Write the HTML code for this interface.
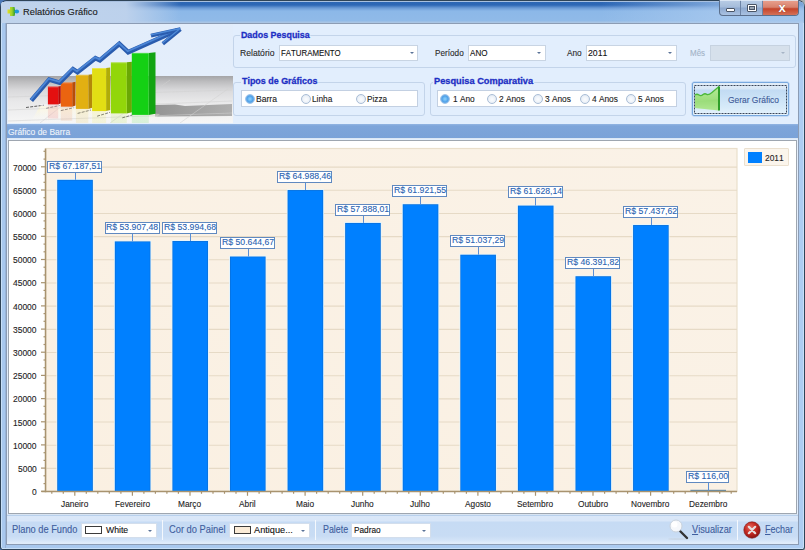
<!DOCTYPE html>
<html><head><meta charset="utf-8">
<style>
*{margin:0;padding:0;box-sizing:border-box}
html,body{width:805px;height:550px;overflow:hidden;background:linear-gradient(90deg,#4a78b8 0,#4a78b8 20px,#a8b0b0 785px)}
body{position:relative;font-family:"Liberation Sans",sans-serif;}
.abs{position:absolute}
#win{position:absolute;left:0;top:0;width:805px;height:550px;background:#2f4458;border-radius:7px 7px 3px 3px;overflow:hidden}
#frame{position:absolute;left:1px;top:1px;width:803px;height:548px;border-radius:6px 6px 2px 2px;background:linear-gradient(90deg,#c8e0f8 0,#c8e0f8 1px,#a8c8ee 1px,#a8c8ee 4px,#98b4d8 4px,#98b4d8 5px,#a8c8ee 5px,#aecdf2 802px,#c8e0f8 802px)}
#title{position:absolute;left:1px;top:1px;width:803px;height:22px;border-radius:6px 6px 0 0;background:linear-gradient(180deg,#a8c0e0 0,#a8c0e0 1px,#2c66b4 1px,#2e68b6 4px,#6b9ad6 7px,#8cb8e8 10px,#90bae8 20px,#a8c4e4 21px)}
#tglow{position:absolute;left:0;top:1px;width:803px;height:21px;background:linear-gradient(90deg,rgba(192,212,236,1) 0,rgba(190,210,236,0.97) 125px,rgba(180,205,235,0) 180px,rgba(170,200,235,0) 600px,rgba(175,205,240,0.6) 715px)}
#ttext{position:absolute;left:23px;top:6px;font-size:11.5px;color:#1a1a1a;letter-spacing:-0.1px}
#client{position:absolute;left:6px;top:23px;width:793px;height:522px;background:#e2eefd;border:1px solid #8c9cb4}
.grp{position:absolute;border:1px solid #c3d4ea;border-radius:3px;background:#e2eefd}
.gt{position:absolute;font-weight:bold;color:#1f32c2;font-size:10.5px;background:#e2eefd;padding:0 1px;white-space:nowrap}
.lbl{position:absolute;font-size:10px;color:#222;white-space:nowrap}
.cmb{position:absolute;background:#fff;border:1px solid #c8d4e3;font-size:10px;color:#111;padding-left:2px;line-height:13px;white-space:nowrap;overflow:hidden}
.cmb.dis{background:#d6e0eb;border-color:#c6d2e0}
.arr{position:absolute;width:0;height:0;border-left:2.5px solid transparent;border-right:2.5px solid transparent;border-top:2.5px solid #5a7398}
.rbox{position:absolute;background:#fff;border:1px solid #c3d0e2}
.rad{position:absolute;width:10px;height:10px;border-radius:50%;border:1px solid #a9bdd6;background:radial-gradient(circle at 50% 55%,#fbfcfe 0,#eef3f9 50%,#d3deec 100%)}
.rad.on{border-color:#9cc2ea;background:radial-gradient(circle,#8fd0fa 0,#6ab8f4 30%,#4f9fe6 55%,#8ec0ee 80%,#c6def6 100%)}
.rt{position:absolute;font-size:10px;color:#222;white-space:nowrap}
#hdr{position:absolute;left:7px;top:124px;width:791px;height:15px;background:linear-gradient(180deg,#93b5e3 0,#7ea5da 2px,#7aa2d8 100%);border-bottom:1px solid #dde8f5}
#hdrt{position:absolute;left:9px;top:126px;font-size:10.5px;color:#eef4fb;white-space:nowrap}
#chartbox{position:absolute;left:8px;top:140px;width:789px;height:374px;background:#fff;border:1px solid #9ea6b0}
.lb{position:absolute;background:#fff;border:1px solid #6089c0;height:12px}
.t{position:absolute;white-space:nowrap;transform-origin:0 0;font-kerning:none;-webkit-text-stroke:0.12px currentColor}
.yl{position:absolute;right:765px;font-size:8.6px;color:#222;line-height:12px;text-align:right;white-space:nowrap}
.ml{position:absolute;top:498px;transform:translateX(-50%);font-size:8.6px;color:#222;line-height:12px;white-space:nowrap}
#tb{position:absolute;left:7px;top:514px;width:791px;height:30px;background:linear-gradient(180deg,#d8e4f2 0,#d8e4f2 1px,#b8d0ec 1px,#b8d0ec 2px,#dae7f8 2px,#d8e6f8 7px,#c6dbf4 8px,#c8dcf4 22px,#d2e3f7 26px,#e0ecfa 29px)}
.tl{position:absolute;font-size:10.5px;color:#3f5fa0;white-space:nowrap}
.sep{position:absolute;width:1px;height:20px;background:#b8c9e0;border-right:1px solid #f4f8fd}
.sw{position:absolute;width:17px;height:8px;border:1px solid #3b3b3b}
</style></head><body>
<div id="win"><div id="frame"></div>
<div id="title"><div id="tglow"></div></div>
<svg class="abs" style="left:6px;top:5px" width="14" height="13" viewBox="0 0 14 13">
 <defs><linearGradient id="ic" x1="0" y1="0" x2="1" y2="0"><stop offset="0" stop-color="#e6e020"/><stop offset="0.6" stop-color="#9ad22a"/><stop offset="1" stop-color="#2f9a2a"/></linearGradient></defs>
 <path d="M4 2 L8.5 2 L9 5 L9 9 L8.5 11 L4 11 L4 8.5 L1.5 8.5 L1.5 4.5 L4 4.5 Z" fill="url(#ic)"/>
 <ellipse cx="10.8" cy="6.6" rx="2.3" ry="2" fill="#1e9ad8"/>
</svg>
<!-- window buttons -->
<div class="abs" style="left:719px;top:0;width:80px;height:16px;border:1px solid #5b6f8c;border-top:none;border-radius:0 0 4px 4px;overflow:hidden;background:linear-gradient(180deg,#b9cde6 0,#a6bddb 45%,#8ea9cf 55%,#a9c2e2 100%)">
 <div class="abs" style="left:20px;top:0;width:1px;height:16px;background:#6d84a6"></div>
 <div class="abs" style="left:42px;top:0;width:1px;height:16px;background:#6d84a6"></div>
 <div class="abs" style="left:43px;top:0;width:36px;height:16px;background:linear-gradient(180deg,#e9a290 0,#d8826e 45%,#c4442b 55%,#d77860 100%)"></div>
 <div class="abs" style="left:6px;top:8px;width:9px;height:4px;background:#fff;border:1px solid #4a5566;border-radius:1px"></div><div class="abs" style="left:0;top:0;width:80px;height:1px;background:#e2ecf8;opacity:0.8"></div>
 <div class="abs" style="left:27px;top:4px;width:10px;height:8px;background:#fff;border:1px solid #4a5566;border-radius:1px"></div><div class="abs" style="left:30px;top:7px;width:4px;height:2px;background:#9aa6b4;box-shadow:0 0 0 1px #4a5566"></div>
 <div class="abs" style="left:54px;top:0;width:16px;height:15px;color:#fff;font-size:13px;font-weight:bold;line-height:15px;text-align:center;text-shadow:0 0 1px #6b2a20">x</div>
</div>
<div id="client"></div>
<div class="abs" style="left:2px;top:548px;width:801px;height:1px;background:#c8e0f8"></div>
</div>

<!-- header image -->
<svg class="abs" style="left:8px;top:24px" width="225" height="99" viewBox="8 24 225 99">
 <defs>
  <linearGradient id="sky" x1="0" y1="0" x2="0" y2="1"><stop offset="0" stop-color="#e2edfb"/><stop offset="1" stop-color="#e6effb"/></linearGradient>
  <linearGradient id="floor" x1="0" y1="76" x2="0" y2="123" gradientUnits="userSpaceOnUse"><stop offset="0" stop-color="#a4a4a6"/><stop offset="0.12" stop-color="#bdbdbf"/><stop offset="0.3" stop-color="#d9d9db"/><stop offset="0.55" stop-color="#e9e9ea"/><stop offset="1" stop-color="#f6f6f6"/></linearGradient>
  <linearGradient id="shad" x1="0" y1="0" x2="1" y2="0"><stop offset="0" stop-color="#8a8a8a"/><stop offset="0.6" stop-color="#9c9c9c"/><stop offset="1" stop-color="#a8a8a8"/></linearGradient>
  <linearGradient id="refl" x1="0" y1="0" x2="0" y2="1"><stop offset="0" stop-color="#fff6c8" stop-opacity="0.9"/><stop offset="1" stop-color="#ffffff" stop-opacity="0"/></linearGradient>
 </defs>
 <rect x="8" y="24" width="225" height="99" fill="url(#sky)"/>
 <rect x="8" y="76" width="225" height="47" fill="url(#floor)"/>
 <path d="M155 105 L175 104.5 L185 106 L232 104 L232 116 L155 116.5 Z" fill="url(#shad)" opacity="0.9"/>
 <path d="M40 106 L160 114 L150 123 L30 123 Z" fill="url(#refl)" opacity="0.8"/>
 <g stroke="#d2d2d2" stroke-width="0.6" fill="none" opacity="0.9">
  <path d="M8 97 L232 90"/><path d="M8 110 L232 101"/><path d="M8 121 L232 113"/>
  <path d="M40 123 L95 80"/><path d="M110 123 L170 80"/><path d="M180 123 L232 86"/>
 </g>
 <g stroke="#505050" stroke-width="1" stroke-dasharray="3 1.2" fill="none" opacity="0.9">
  <path d="M26 107.5 L44 105.2"/><path d="M46.2 108.3 L59.7 105.5"/><path d="M60.8 110.6 L73.6 107.8"/><path d="M77.6 113.4 L91 110"/><path d="M97.1 116.2 L110 112.3"/><path d="M122.3 117.8 L132.4 115"/>
 </g>
 <defs><linearGradient id="rf" x1="0" y1="0" x2="0" y2="1"><stop offset="0" stop-color="#fff" stop-opacity="0.75"/><stop offset="1" stop-color="#fff" stop-opacity="0"/></linearGradient></defs>
 <path d="M47.9 104.4 L58.2 104.4 L58.2 118.4 L47.9 118.4 Z" fill="#e41010" opacity="0.13"/>
 <path d="M60.8 106.7 L72.2 106.7 L72.2 120.7 L60.8 120.7 Z" fill="#ea6410" opacity="0.13"/>
 <path d="M75.9 108.9 L88.3 108.9 L88.3 122.9 L75.9 122.9 Z" fill="#e2b012" opacity="0.13"/>
 <path d="M92.1 111.1 L106.1 111.1 L106.1 125.1 L92.1 125.1 Z" fill="#e2de14" opacity="0.13"/>
 <path d="M110.9 113.4 L126.8 113.4 L126.8 127.4 L110.9 127.4 Z" fill="#92d60a" opacity="0.13"/>
 <path d="M131.8 114.9 L148.7 114.9 L148.7 128.9 L131.8 128.9 Z" fill="#14d014" opacity="0.13"/>
 <rect x="40" y="104" width="108" height="19" fill="url(#rf)" opacity="0.5"/>
 <!-- bars -->
 <path d="M58.2 86.5 L60.8 85.9 L60.8 103.2 L58.2 104.4 Z" fill="#b80808"/>
 <rect x="47.9" y="86.5" width="10.3" height="17.9" fill="#e41010"/>
 <rect x="47.9" y="86.5" width="10.3" height="1" fill="#ffffff" opacity="0.25"/>
 <path d="M72.2 82.4 L75.5 81.80000000000001 L75.5 105.5 L72.2 106.7 Z" fill="#b84c08"/>
 <rect x="60.8" y="82.4" width="11.4" height="24.3" fill="#ea6410"/>
 <rect x="60.8" y="82.4" width="11.4" height="1" fill="#ffffff" opacity="0.25"/>
 <path d="M88.3 74.8 L92.2 74.2 L92.2 107.7 L88.3 108.9 Z" fill="#b48808"/>
 <rect x="75.9" y="74.8" width="12.4" height="34.1" fill="#e2b012"/>
 <rect x="75.9" y="74.8" width="12.4" height="1" fill="#ffffff" opacity="0.25"/>
 <path d="M106.1 68.0 L110.2 67.4 L110.2 109.89999999999999 L106.1 111.1 Z" fill="#b0ac08"/>
 <rect x="92.1" y="68.0" width="14.0" height="43.1" fill="#e2de14"/>
 <rect x="92.1" y="68.0" width="14.0" height="1" fill="#ffffff" opacity="0.25"/>
 <path d="M126.8 62.3 L131.9 61.699999999999996 L131.9 112.2 L126.8 113.4 Z" fill="#6aa804"/>
 <rect x="110.9" y="62.3" width="15.9" height="51.1" fill="#92d60a"/>
 <rect x="110.9" y="62.3" width="15.9" height="1" fill="#ffffff" opacity="0.25"/>
 <path d="M148.7 52.9 L155.5 52.3 L155.5 113.7 L148.7 114.9 Z" fill="#12a412"/>
 <rect x="131.8" y="52.9" width="16.9" height="62.0" fill="#14d014"/>
 <rect x="131.8" y="52.9" width="16.9" height="1" fill="#ffffff" opacity="0.25"/>
 <!-- arrow -->
 <path d="M31.3 100.5 L49.2 79.6 L59.6 82.6 L73 69.2 L77.5 72.2 L95.4 58.2 L99.9 60.3 L119.3 43.9 L128.2 52.2 L178 30" fill="none" stroke="#2a5cae" stroke-width="4.6" stroke-linejoin="miter" stroke-miterlimit="3"/>
 <path d="M31.3 100.5 L49.2 79.6 L59.6 82.6 L73 69.2 L77.5 72.2 L95.4 58.2 L99.9 60.3 L119.3 43.9 L128.2 52.2 L178 30" fill="none" stroke="#4c86d6" stroke-width="1.8" stroke-linejoin="miter" stroke-miterlimit="3" transform="translate(-0.5,-0.9)"/>
 <path d="M151 35.6 L180.5 29.2 M162.8 43.8 L180.5 29.2" fill="none" stroke="#2a5cae" stroke-width="3.8" stroke-linecap="butt"/>
 <path d="M151 35.6 L180.5 29.2 M162.8 43.8 L180.5 29.2" fill="none" stroke="#4e8ad8" stroke-width="1.3" transform="translate(-0.3,-0.7)"/>
</svg>

<!-- Dados Pesquisa -->
<div class="grp" style="left:233px;top:35px;width:563px;height:33px"></div>
<div class="cmb" style="left:279px;top:45px;width:139px;height:16px"></div><div class="arr" style="left:410px;top:52px"></div>
<div class="cmb" style="left:468px;top:45px;width:78px;height:16px"></div><div class="arr" style="left:537px;top:52px"></div>
<div class="cmb" style="left:586px;top:45px;width:91px;height:16px"></div><div class="arr" style="left:668px;top:52px"></div>
<div class="cmb dis" style="left:710px;top:45px;width:80px;height:16px"></div><div class="arr" style="left:781px;top:52px;border-top-color:#a6b4c6"></div>

<!-- Tipos de Graficos -->
<div class="grp" style="left:233px;top:82px;width:192px;height:34px"></div>
<div class="rbox" style="left:241px;top:90px;width:177px;height:17px"></div>
<div class="rad on" style="left:245px;top:94px"></div>
<div class="rad" style="left:301px;top:94px"></div>
<div class="rad" style="left:356px;top:94px"></div>

<!-- Pesquisa Comparativa -->
<div class="grp" style="left:430px;top:82px;width:256px;height:34px"></div>
<div class="rbox" style="left:437px;top:90px;width:240px;height:17px"></div>
<div class="rad on" style="left:440px;top:94px"></div>
<div class="rad" style="left:487px;top:94px"></div>
<div class="rad" style="left:533px;top:94px"></div>
<div class="rad" style="left:580px;top:94px"></div>
<div class="rad" style="left:626px;top:94px"></div>

<!-- Gerar button -->
<div class="abs" style="left:692px;top:82px;width:97px;height:34px;border:1px solid #78a8de;border-radius:2px;box-shadow:0 0 0 0.5px #a8c8ee;background:linear-gradient(180deg,#e4eef8 0,#d8e7f6 6px,#c2dbf3 7px,#c8e0f5 40%,#d6eaf9 75%,#e6f3fd 100%)"></div>
<svg class="abs" style="left:694px;top:85px" width="94" height="30" viewBox="0 0 94 30"><rect x="0.5" y="0.5" width="92" height="28" fill="none" stroke="#3a4558" stroke-width="1" stroke-dasharray="2 1"/></svg>
<svg class="abs" style="left:694px;top:85px" width="28" height="28" viewBox="0 0 28 28">
 <defs><linearGradient id="gg" x1="0" y1="0" x2="0" y2="1"><stop offset="0" stop-color="#b4ec96"/><stop offset="0.55" stop-color="#9ede7e"/><stop offset="1" stop-color="#c6f2aa"/></linearGradient></defs>
 <path d="M1 10 Q3 8.5 5 10 Q7 11.5 9 9.5 Q11 8 13 9.5 Q15 10 18 7.5 L25 1.5 L25 25.5 L1 23 Z" fill="url(#gg)"/>
 <path d="M1 16 L25 14.5 L25 25.5 L1 23 Z" fill="#8ed86e" opacity="0.4"/>
 <path d="M1 10 Q3 8.5 5 10 Q7 11.5 9 9.5 Q11 8 13 9.5 Q15 10 18 7.5 L25 1.5" fill="none" stroke="#4cb83a" stroke-width="1.3"/>
 <path d="M25 1.5 L25 25.5" stroke="#2e9e2a" stroke-width="2"/>
</svg>

<!-- chart panel -->
<div id="hdr"></div>
<div id="chartbox"></div>
<svg width="805" height="550" style="position:absolute;left:0;top:0">
<defs><linearGradient id="pbg" x1="0" y1="1" x2="1" y2="0"><stop offset="0" stop-color="#faf0e2"/><stop offset="1" stop-color="#faf2e7"/></linearGradient></defs>
<rect x="46.0" y="148.5" width="691.0" height="342.8" fill="url(#pbg)" stroke="#eadfcb" stroke-width="1.2"/>
<line x1="46.0" y1="468.42" x2="737.0" y2="468.42" stroke="#e6dac6" stroke-width="1.1"/>
<line x1="46.0" y1="445.24" x2="737.0" y2="445.24" stroke="#e6dac6" stroke-width="1.1"/>
<line x1="46.0" y1="422.06" x2="737.0" y2="422.06" stroke="#e6dac6" stroke-width="1.1"/>
<line x1="46.0" y1="398.89" x2="737.0" y2="398.89" stroke="#e6dac6" stroke-width="1.1"/>
<line x1="46.0" y1="375.71" x2="737.0" y2="375.71" stroke="#e6dac6" stroke-width="1.1"/>
<line x1="46.0" y1="352.53" x2="737.0" y2="352.53" stroke="#e6dac6" stroke-width="1.1"/>
<line x1="46.0" y1="329.35" x2="737.0" y2="329.35" stroke="#e6dac6" stroke-width="1.1"/>
<line x1="46.0" y1="306.17" x2="737.0" y2="306.17" stroke="#e6dac6" stroke-width="1.1"/>
<line x1="46.0" y1="282.99" x2="737.0" y2="282.99" stroke="#e6dac6" stroke-width="1.1"/>
<line x1="46.0" y1="259.81" x2="737.0" y2="259.81" stroke="#e6dac6" stroke-width="1.1"/>
<line x1="46.0" y1="236.64" x2="737.0" y2="236.64" stroke="#e6dac6" stroke-width="1.1"/>
<line x1="46.0" y1="213.46" x2="737.0" y2="213.46" stroke="#e6dac6" stroke-width="1.1"/>
<line x1="46.0" y1="190.28" x2="737.0" y2="190.28" stroke="#e6dac6" stroke-width="1.1"/>
<line x1="46.0" y1="167.10" x2="737.0" y2="167.10" stroke="#e6dac6" stroke-width="1.1"/>
<rect x="56.44" y="179.04" width="37.2" height="312.26" fill="#e4f6ff"/>
<rect x="57.24" y="179.84" width="35.6" height="311.46" fill="#0a6fd8"/>
<rect x="57.94" y="180.54" width="34.2" height="310.76" fill="#0080ff"/>
<rect x="114.03" y="240.60" width="37.2" height="250.70" fill="#e4f6ff"/>
<rect x="114.83" y="241.40" width="35.6" height="249.90" fill="#0a6fd8"/>
<rect x="115.53" y="242.10" width="34.2" height="249.20" fill="#0080ff"/>
<rect x="171.61" y="240.20" width="37.2" height="251.10" fill="#e4f6ff"/>
<rect x="172.41" y="241.00" width="35.6" height="250.30" fill="#0a6fd8"/>
<rect x="173.11" y="241.70" width="34.2" height="249.60" fill="#0080ff"/>
<rect x="229.19" y="255.73" width="37.2" height="235.57" fill="#e4f6ff"/>
<rect x="229.99" y="256.53" width="35.6" height="234.77" fill="#0a6fd8"/>
<rect x="230.69" y="257.23" width="34.2" height="234.07" fill="#0080ff"/>
<rect x="286.77" y="189.23" width="37.2" height="302.07" fill="#e4f6ff"/>
<rect x="287.57" y="190.03" width="35.6" height="301.27" fill="#0a6fd8"/>
<rect x="288.27" y="190.73" width="34.2" height="300.57" fill="#0080ff"/>
<rect x="344.36" y="222.15" width="37.2" height="269.15" fill="#e4f6ff"/>
<rect x="345.16" y="222.95" width="35.6" height="268.35" fill="#0a6fd8"/>
<rect x="345.86" y="223.65" width="34.2" height="267.65" fill="#0080ff"/>
<rect x="401.94" y="203.45" width="37.2" height="287.85" fill="#e4f6ff"/>
<rect x="402.74" y="204.25" width="35.6" height="287.05" fill="#0a6fd8"/>
<rect x="403.44" y="204.95" width="34.2" height="286.35" fill="#0080ff"/>
<rect x="459.52" y="253.91" width="37.2" height="237.39" fill="#e4f6ff"/>
<rect x="460.32" y="254.71" width="35.6" height="236.59" fill="#0a6fd8"/>
<rect x="461.02" y="255.41" width="34.2" height="235.89" fill="#0080ff"/>
<rect x="517.11" y="204.81" width="37.2" height="286.49" fill="#e4f6ff"/>
<rect x="517.91" y="205.61" width="35.6" height="285.69" fill="#0a6fd8"/>
<rect x="518.61" y="206.31" width="34.2" height="284.99" fill="#0080ff"/>
<rect x="574.69" y="275.44" width="37.2" height="215.86" fill="#e4f6ff"/>
<rect x="575.49" y="276.24" width="35.6" height="215.06" fill="#0a6fd8"/>
<rect x="576.19" y="276.94" width="34.2" height="214.36" fill="#0080ff"/>
<rect x="632.28" y="224.24" width="37.2" height="267.06" fill="#e4f6ff"/>
<rect x="633.08" y="225.04" width="35.6" height="266.26" fill="#0a6fd8"/>
<rect x="633.78" y="225.74" width="34.2" height="265.56" fill="#0080ff"/>
<rect x="690.4" y="489.8" width="35.6" height="1.5" fill="#5d88a8"/>
<line x1="45.5" y1="148.5" x2="45.5" y2="492.3" stroke="#a8936f" stroke-width="1.5"/>
<line x1="41.5" y1="491.5" x2="737.0" y2="491.5" stroke="#a8936f" stroke-width="1.5"/>
<line x1="41.0" y1="491.3" x2="46.0" y2="491.3" stroke="#a8936f" stroke-width="1.2"/>
<line x1="43.5" y1="483.6" x2="46.0" y2="483.6" stroke="#a8936f" stroke-width="1.2"/>
<line x1="43.5" y1="475.8" x2="46.0" y2="475.8" stroke="#a8936f" stroke-width="1.2"/>
<line x1="41.0" y1="468.1" x2="46.0" y2="468.1" stroke="#a8936f" stroke-width="1.2"/>
<line x1="43.5" y1="460.4" x2="46.0" y2="460.4" stroke="#a8936f" stroke-width="1.2"/>
<line x1="43.5" y1="452.7" x2="46.0" y2="452.7" stroke="#a8936f" stroke-width="1.2"/>
<line x1="41.0" y1="444.9" x2="46.0" y2="444.9" stroke="#a8936f" stroke-width="1.2"/>
<line x1="43.5" y1="437.2" x2="46.0" y2="437.2" stroke="#a8936f" stroke-width="1.2"/>
<line x1="43.5" y1="429.5" x2="46.0" y2="429.5" stroke="#a8936f" stroke-width="1.2"/>
<line x1="41.0" y1="421.8" x2="46.0" y2="421.8" stroke="#a8936f" stroke-width="1.2"/>
<line x1="43.5" y1="414.0" x2="46.0" y2="414.0" stroke="#a8936f" stroke-width="1.2"/>
<line x1="43.5" y1="406.3" x2="46.0" y2="406.3" stroke="#a8936f" stroke-width="1.2"/>
<line x1="41.0" y1="398.6" x2="46.0" y2="398.6" stroke="#a8936f" stroke-width="1.2"/>
<line x1="43.5" y1="390.9" x2="46.0" y2="390.9" stroke="#a8936f" stroke-width="1.2"/>
<line x1="43.5" y1="383.1" x2="46.0" y2="383.1" stroke="#a8936f" stroke-width="1.2"/>
<line x1="41.0" y1="375.4" x2="46.0" y2="375.4" stroke="#a8936f" stroke-width="1.2"/>
<line x1="43.5" y1="367.7" x2="46.0" y2="367.7" stroke="#a8936f" stroke-width="1.2"/>
<line x1="43.5" y1="360.0" x2="46.0" y2="360.0" stroke="#a8936f" stroke-width="1.2"/>
<line x1="41.0" y1="352.2" x2="46.0" y2="352.2" stroke="#a8936f" stroke-width="1.2"/>
<line x1="43.5" y1="344.5" x2="46.0" y2="344.5" stroke="#a8936f" stroke-width="1.2"/>
<line x1="43.5" y1="336.8" x2="46.0" y2="336.8" stroke="#a8936f" stroke-width="1.2"/>
<line x1="41.0" y1="329.1" x2="46.0" y2="329.1" stroke="#a8936f" stroke-width="1.2"/>
<line x1="43.5" y1="321.3" x2="46.0" y2="321.3" stroke="#a8936f" stroke-width="1.2"/>
<line x1="43.5" y1="313.6" x2="46.0" y2="313.6" stroke="#a8936f" stroke-width="1.2"/>
<line x1="41.0" y1="305.9" x2="46.0" y2="305.9" stroke="#a8936f" stroke-width="1.2"/>
<line x1="43.5" y1="298.1" x2="46.0" y2="298.1" stroke="#a8936f" stroke-width="1.2"/>
<line x1="43.5" y1="290.4" x2="46.0" y2="290.4" stroke="#a8936f" stroke-width="1.2"/>
<line x1="41.0" y1="282.7" x2="46.0" y2="282.7" stroke="#a8936f" stroke-width="1.2"/>
<line x1="43.5" y1="275.0" x2="46.0" y2="275.0" stroke="#a8936f" stroke-width="1.2"/>
<line x1="43.5" y1="267.2" x2="46.0" y2="267.2" stroke="#a8936f" stroke-width="1.2"/>
<line x1="41.0" y1="259.5" x2="46.0" y2="259.5" stroke="#a8936f" stroke-width="1.2"/>
<line x1="43.5" y1="251.8" x2="46.0" y2="251.8" stroke="#a8936f" stroke-width="1.2"/>
<line x1="43.5" y1="244.1" x2="46.0" y2="244.1" stroke="#a8936f" stroke-width="1.2"/>
<line x1="41.0" y1="236.3" x2="46.0" y2="236.3" stroke="#a8936f" stroke-width="1.2"/>
<line x1="43.5" y1="228.6" x2="46.0" y2="228.6" stroke="#a8936f" stroke-width="1.2"/>
<line x1="43.5" y1="220.9" x2="46.0" y2="220.9" stroke="#a8936f" stroke-width="1.2"/>
<line x1="41.0" y1="213.2" x2="46.0" y2="213.2" stroke="#a8936f" stroke-width="1.2"/>
<line x1="43.5" y1="205.4" x2="46.0" y2="205.4" stroke="#a8936f" stroke-width="1.2"/>
<line x1="43.5" y1="197.7" x2="46.0" y2="197.7" stroke="#a8936f" stroke-width="1.2"/>
<line x1="41.0" y1="190.0" x2="46.0" y2="190.0" stroke="#a8936f" stroke-width="1.2"/>
<line x1="43.5" y1="182.3" x2="46.0" y2="182.3" stroke="#a8936f" stroke-width="1.2"/>
<line x1="43.5" y1="174.5" x2="46.0" y2="174.5" stroke="#a8936f" stroke-width="1.2"/>
<line x1="41.0" y1="166.8" x2="46.0" y2="166.8" stroke="#a8936f" stroke-width="1.2"/>
<line x1="43.5" y1="159.1" x2="46.0" y2="159.1" stroke="#a8936f" stroke-width="1.2"/>
<line x1="43.5" y1="151.3" x2="46.0" y2="151.3" stroke="#a8936f" stroke-width="1.2"/>
<line x1="74.8" y1="491.3" x2="74.8" y2="495.8" stroke="#a8936f" stroke-width="1.2"/>
<line x1="132.4" y1="491.3" x2="132.4" y2="495.8" stroke="#a8936f" stroke-width="1.2"/>
<line x1="190.0" y1="491.3" x2="190.0" y2="495.8" stroke="#a8936f" stroke-width="1.2"/>
<line x1="247.5" y1="491.3" x2="247.5" y2="495.8" stroke="#a8936f" stroke-width="1.2"/>
<line x1="305.1" y1="491.3" x2="305.1" y2="495.8" stroke="#a8936f" stroke-width="1.2"/>
<line x1="362.7" y1="491.3" x2="362.7" y2="495.8" stroke="#a8936f" stroke-width="1.2"/>
<line x1="420.3" y1="491.3" x2="420.3" y2="495.8" stroke="#a8936f" stroke-width="1.2"/>
<line x1="477.9" y1="491.3" x2="477.9" y2="495.8" stroke="#a8936f" stroke-width="1.2"/>
<line x1="535.5" y1="491.3" x2="535.5" y2="495.8" stroke="#a8936f" stroke-width="1.2"/>
<line x1="593.0" y1="491.3" x2="593.0" y2="495.8" stroke="#a8936f" stroke-width="1.2"/>
<line x1="650.6" y1="491.3" x2="650.6" y2="495.8" stroke="#a8936f" stroke-width="1.2"/>
<line x1="708.2" y1="491.3" x2="708.2" y2="495.8" stroke="#a8936f" stroke-width="1.2"/>
<line x1="51.8" y1="491.3" x2="51.8" y2="493.8" stroke="#a8936f" stroke-width="1.2"/>
<line x1="63.3" y1="491.3" x2="63.3" y2="493.8" stroke="#a8936f" stroke-width="1.2"/>
<line x1="86.3" y1="491.3" x2="86.3" y2="493.8" stroke="#a8936f" stroke-width="1.2"/>
<line x1="97.8" y1="491.3" x2="97.8" y2="493.8" stroke="#a8936f" stroke-width="1.2"/>
<line x1="109.3" y1="491.3" x2="109.3" y2="493.8" stroke="#a8936f" stroke-width="1.2"/>
<line x1="120.9" y1="491.3" x2="120.9" y2="493.8" stroke="#a8936f" stroke-width="1.2"/>
<line x1="143.9" y1="491.3" x2="143.9" y2="493.8" stroke="#a8936f" stroke-width="1.2"/>
<line x1="155.4" y1="491.3" x2="155.4" y2="493.8" stroke="#a8936f" stroke-width="1.2"/>
<line x1="166.9" y1="491.3" x2="166.9" y2="493.8" stroke="#a8936f" stroke-width="1.2"/>
<line x1="178.4" y1="491.3" x2="178.4" y2="493.8" stroke="#a8936f" stroke-width="1.2"/>
<line x1="201.5" y1="491.3" x2="201.5" y2="493.8" stroke="#a8936f" stroke-width="1.2"/>
<line x1="213.0" y1="491.3" x2="213.0" y2="493.8" stroke="#a8936f" stroke-width="1.2"/>
<line x1="224.5" y1="491.3" x2="224.5" y2="493.8" stroke="#a8936f" stroke-width="1.2"/>
<line x1="236.0" y1="491.3" x2="236.0" y2="493.8" stroke="#a8936f" stroke-width="1.2"/>
<line x1="259.1" y1="491.3" x2="259.1" y2="493.8" stroke="#a8936f" stroke-width="1.2"/>
<line x1="270.6" y1="491.3" x2="270.6" y2="493.8" stroke="#a8936f" stroke-width="1.2"/>
<line x1="282.1" y1="491.3" x2="282.1" y2="493.8" stroke="#a8936f" stroke-width="1.2"/>
<line x1="293.6" y1="491.3" x2="293.6" y2="493.8" stroke="#a8936f" stroke-width="1.2"/>
<line x1="316.6" y1="491.3" x2="316.6" y2="493.8" stroke="#a8936f" stroke-width="1.2"/>
<line x1="328.2" y1="491.3" x2="328.2" y2="493.8" stroke="#a8936f" stroke-width="1.2"/>
<line x1="339.7" y1="491.3" x2="339.7" y2="493.8" stroke="#a8936f" stroke-width="1.2"/>
<line x1="351.2" y1="491.3" x2="351.2" y2="493.8" stroke="#a8936f" stroke-width="1.2"/>
<line x1="374.2" y1="491.3" x2="374.2" y2="493.8" stroke="#a8936f" stroke-width="1.2"/>
<line x1="385.7" y1="491.3" x2="385.7" y2="493.8" stroke="#a8936f" stroke-width="1.2"/>
<line x1="397.3" y1="491.3" x2="397.3" y2="493.8" stroke="#a8936f" stroke-width="1.2"/>
<line x1="408.8" y1="491.3" x2="408.8" y2="493.8" stroke="#a8936f" stroke-width="1.2"/>
<line x1="431.8" y1="491.3" x2="431.8" y2="493.8" stroke="#a8936f" stroke-width="1.2"/>
<line x1="443.3" y1="491.3" x2="443.3" y2="493.8" stroke="#a8936f" stroke-width="1.2"/>
<line x1="454.8" y1="491.3" x2="454.8" y2="493.8" stroke="#a8936f" stroke-width="1.2"/>
<line x1="466.4" y1="491.3" x2="466.4" y2="493.8" stroke="#a8936f" stroke-width="1.2"/>
<line x1="489.4" y1="491.3" x2="489.4" y2="493.8" stroke="#a8936f" stroke-width="1.2"/>
<line x1="500.9" y1="491.3" x2="500.9" y2="493.8" stroke="#a8936f" stroke-width="1.2"/>
<line x1="512.4" y1="491.3" x2="512.4" y2="493.8" stroke="#a8936f" stroke-width="1.2"/>
<line x1="523.9" y1="491.3" x2="523.9" y2="493.8" stroke="#a8936f" stroke-width="1.2"/>
<line x1="547.0" y1="491.3" x2="547.0" y2="493.8" stroke="#a8936f" stroke-width="1.2"/>
<line x1="558.5" y1="491.3" x2="558.5" y2="493.8" stroke="#a8936f" stroke-width="1.2"/>
<line x1="570.0" y1="491.3" x2="570.0" y2="493.8" stroke="#a8936f" stroke-width="1.2"/>
<line x1="581.5" y1="491.3" x2="581.5" y2="493.8" stroke="#a8936f" stroke-width="1.2"/>
<line x1="604.6" y1="491.3" x2="604.6" y2="493.8" stroke="#a8936f" stroke-width="1.2"/>
<line x1="616.1" y1="491.3" x2="616.1" y2="493.8" stroke="#a8936f" stroke-width="1.2"/>
<line x1="627.6" y1="491.3" x2="627.6" y2="493.8" stroke="#a8936f" stroke-width="1.2"/>
<line x1="639.1" y1="491.3" x2="639.1" y2="493.8" stroke="#a8936f" stroke-width="1.2"/>
<line x1="662.1" y1="491.3" x2="662.1" y2="493.8" stroke="#a8936f" stroke-width="1.2"/>
<line x1="673.7" y1="491.3" x2="673.7" y2="493.8" stroke="#a8936f" stroke-width="1.2"/>
<line x1="685.2" y1="491.3" x2="685.2" y2="493.8" stroke="#a8936f" stroke-width="1.2"/>
<line x1="696.7" y1="491.3" x2="696.7" y2="493.8" stroke="#a8936f" stroke-width="1.2"/>
<line x1="719.7" y1="491.3" x2="719.7" y2="493.8" stroke="#a8936f" stroke-width="1.2"/>
<line x1="731.2" y1="491.3" x2="731.2" y2="493.8" stroke="#a8936f" stroke-width="1.2"/>
<line x1="75.5" y1="171.8" x2="75.5" y2="179.8" stroke="#5a8fd6" stroke-width="1"/>
<line x1="132.5" y1="233.4" x2="132.5" y2="241.4" stroke="#5a8fd6" stroke-width="1"/>
<line x1="190.5" y1="233.0" x2="190.5" y2="241.0" stroke="#5a8fd6" stroke-width="1"/>
<line x1="248.5" y1="248.5" x2="248.5" y2="256.5" stroke="#5a8fd6" stroke-width="1"/>
<line x1="305.5" y1="182.0" x2="305.5" y2="190.0" stroke="#5a8fd6" stroke-width="1"/>
<line x1="363.5" y1="214.9" x2="363.5" y2="222.9" stroke="#5a8fd6" stroke-width="1"/>
<line x1="420.5" y1="196.2" x2="420.5" y2="204.2" stroke="#5a8fd6" stroke-width="1"/>
<line x1="478.5" y1="246.7" x2="478.5" y2="254.7" stroke="#5a8fd6" stroke-width="1"/>
<line x1="535.5" y1="197.6" x2="535.5" y2="205.6" stroke="#5a8fd6" stroke-width="1"/>
<line x1="593.5" y1="268.2" x2="593.5" y2="276.2" stroke="#5a8fd6" stroke-width="1"/>
<line x1="651.5" y1="217.0" x2="651.5" y2="225.0" stroke="#5a8fd6" stroke-width="1"/>
<line x1="708.5" y1="482.8" x2="708.5" y2="490.8" stroke="#5a8fd6" stroke-width="1"/>
</svg>


<div class="lb" style="left:47px;top:161px;width:55px"></div>
<div class="lb" style="left:105px;top:222px;width:55px"></div>
<div class="lb" style="left:162px;top:222px;width:55px"></div>
<div class="lb" style="left:220px;top:237px;width:55px"></div>
<div class="lb" style="left:277px;top:171px;width:55px"></div>
<div class="lb" style="left:335px;top:204px;width:55px"></div>
<div class="lb" style="left:392px;top:185px;width:55px"></div>
<div class="lb" style="left:450px;top:235px;width:55px"></div>
<div class="lb" style="left:508px;top:186px;width:55px"></div>
<div class="lb" style="left:565px;top:257px;width:55px"></div>
<div class="lb" style="left:623px;top:206px;width:55px"></div>
<div class="lb" style="left:686px;top:471px;width:43px"></div>
<!-- legend -->
<div class="abs" style="left:744px;top:148px;width:45px;height:18px;background:#fbf5ec;border:1px solid #ebe0cf;border-radius:1px"></div>
<div class="abs" style="left:748px;top:152px;width:14px;height:11px;background:#0080ff"></div>

<!-- bottom toolbar -->
<div id="tb"></div>
<div class="cmb" style="left:81px;top:523px;width:76px;height:15px;border-color:#d3deec"></div>
<div class="sw" style="left:85px;top:526px;background:#fff"></div>
<div class="arr" style="left:148px;top:530px"></div>
<div class="sep" style="left:162px;top:520px"></div>
<div class="cmb" style="left:229px;top:523px;width:81px;height:15px;border-color:#d3deec"></div>
<div class="sw" style="left:234px;top:526px;background:#faebd7"></div>
<div class="arr" style="left:301px;top:530px"></div>
<div class="sep" style="left:315px;top:520px"></div>
<div class="cmb" style="left:351px;top:523px;width:80px;height:15px;border-color:#d3deec"></div>
<div class="arr" style="left:422px;top:530px"></div>

<svg class="abs" style="left:666px;top:518px" width="26" height="24" viewBox="0 0 26 24">
 <ellipse cx="12" cy="21" rx="10" ry="1" fill="#c8d4e2" opacity="0.7"/>
 <line x1="14" y1="13" x2="21" y2="20" stroke="#333" stroke-width="2.4" stroke-linecap="round"/>
 <circle cx="10" cy="8" r="6" fill="#f6f8fb" stroke="#c9d2dc" stroke-width="1"/>
 <circle cx="8.5" cy="6.5" r="3" fill="#fff"/>
</svg>
<div class="sep" style="left:737px;top:520px"></div>
<svg class="abs" style="left:743px;top:521px" width="18" height="18" viewBox="0 0 18 18">
 <defs><radialGradient id="rc" cx="0.4" cy="0.35" r="0.7"><stop offset="0" stop-color="#e86a5e"/><stop offset="0.5" stop-color="#c42a22"/><stop offset="1" stop-color="#861010"/></radialGradient></defs>
 <circle cx="9" cy="9" r="8.2" fill="url(#rc)" stroke="#7a1a1a" stroke-width="0.6"/>
 <path d="M5.8 5.8 L12.2 12.2 M12.2 5.8 L5.8 12.2" stroke="#e6dede" stroke-width="2.2" stroke-linecap="round"/>
</svg>
<!-- bottom frame -->

<div class="t" style="left:48.89px;top:161.30px;font-size:9.5px;line-height:9.5px;color:#2a62b0;font-weight:normal;transform:scaleX(0.915);-webkit-text-stroke:0.1px currentColor">R$ 67.187,51</div>
<div class="t" style="left:106.48px;top:222.30px;font-size:9.5px;line-height:9.5px;color:#2a62b0;font-weight:normal;transform:scaleX(0.915);-webkit-text-stroke:0.1px currentColor">R$ 53.907,48</div>
<div class="t" style="left:164.06px;top:222.30px;font-size:9.5px;line-height:9.5px;color:#2a62b0;font-weight:normal;transform:scaleX(0.915);-webkit-text-stroke:0.1px currentColor">R$ 53.994,68</div>
<div class="t" style="left:221.64px;top:237.30px;font-size:9.5px;line-height:9.5px;color:#2a62b0;font-weight:normal;transform:scaleX(0.915);-webkit-text-stroke:0.1px currentColor">R$ 50.644,67</div>
<div class="t" style="left:279.23px;top:171.30px;font-size:9.5px;line-height:9.5px;color:#2a62b0;font-weight:normal;transform:scaleX(0.915);-webkit-text-stroke:0.1px currentColor">R$ 64.988,46</div>
<div class="t" style="left:336.81px;top:204.30px;font-size:9.5px;line-height:9.5px;color:#2a62b0;font-weight:normal;transform:scaleX(0.915);-webkit-text-stroke:0.1px currentColor">R$ 57.888,01</div>
<div class="t" style="left:394.39px;top:185.30px;font-size:9.5px;line-height:9.5px;color:#2a62b0;font-weight:normal;transform:scaleX(0.915);-webkit-text-stroke:0.1px currentColor">R$ 61.921,55</div>
<div class="t" style="left:451.98px;top:235.30px;font-size:9.5px;line-height:9.5px;color:#2a62b0;font-weight:normal;transform:scaleX(0.915);-webkit-text-stroke:0.1px currentColor">R$ 51.037,29</div>
<div class="t" style="left:509.56px;top:186.30px;font-size:9.5px;line-height:9.5px;color:#2a62b0;font-weight:normal;transform:scaleX(0.915);-webkit-text-stroke:0.1px currentColor">R$ 61.628,14</div>
<div class="t" style="left:567.14px;top:257.30px;font-size:9.5px;line-height:9.5px;color:#2a62b0;font-weight:normal;transform:scaleX(0.915);-webkit-text-stroke:0.1px currentColor">R$ 46.391,82</div>
<div class="t" style="left:624.73px;top:206.30px;font-size:9.5px;line-height:9.5px;color:#2a62b0;font-weight:normal;transform:scaleX(0.915);-webkit-text-stroke:0.1px currentColor">R$ 57.437,62</div>
<div class="t" style="left:688.35px;top:471.30px;font-size:9.5px;line-height:9.5px;color:#2a62b0;font-weight:normal;transform:scaleX(0.915);-webkit-text-stroke:0.1px currentColor">R$ 116,00</div>
<div class="t" style="left:32.00px;top:487.10px;font-size:9.5px;line-height:9.5px;color:#1e1e1e;font-weight:normal;transform:scaleX(0.890);">0</div>
<div class="t" style="left:17.89px;top:463.92px;font-size:9.5px;line-height:9.5px;color:#1e1e1e;font-weight:normal;transform:scaleX(0.890);">5000</div>
<div class="t" style="left:13.19px;top:440.74px;font-size:9.5px;line-height:9.5px;color:#1e1e1e;font-weight:normal;transform:scaleX(0.890);">10000</div>
<div class="t" style="left:13.19px;top:417.56px;font-size:9.5px;line-height:9.5px;color:#1e1e1e;font-weight:normal;transform:scaleX(0.890);">15000</div>
<div class="t" style="left:13.19px;top:394.39px;font-size:9.5px;line-height:9.5px;color:#1e1e1e;font-weight:normal;transform:scaleX(0.890);">20000</div>
<div class="t" style="left:13.19px;top:371.21px;font-size:9.5px;line-height:9.5px;color:#1e1e1e;font-weight:normal;transform:scaleX(0.890);">25000</div>
<div class="t" style="left:13.19px;top:348.03px;font-size:9.5px;line-height:9.5px;color:#1e1e1e;font-weight:normal;transform:scaleX(0.890);">30000</div>
<div class="t" style="left:13.19px;top:324.85px;font-size:9.5px;line-height:9.5px;color:#1e1e1e;font-weight:normal;transform:scaleX(0.890);">35000</div>
<div class="t" style="left:13.19px;top:301.67px;font-size:9.5px;line-height:9.5px;color:#1e1e1e;font-weight:normal;transform:scaleX(0.890);">40000</div>
<div class="t" style="left:13.19px;top:278.49px;font-size:9.5px;line-height:9.5px;color:#1e1e1e;font-weight:normal;transform:scaleX(0.890);">45000</div>
<div class="t" style="left:13.19px;top:255.31px;font-size:9.5px;line-height:9.5px;color:#1e1e1e;font-weight:normal;transform:scaleX(0.890);">50000</div>
<div class="t" style="left:13.19px;top:232.14px;font-size:9.5px;line-height:9.5px;color:#1e1e1e;font-weight:normal;transform:scaleX(0.890);">55000</div>
<div class="t" style="left:13.19px;top:208.96px;font-size:9.5px;line-height:9.5px;color:#1e1e1e;font-weight:normal;transform:scaleX(0.890);">60000</div>
<div class="t" style="left:13.19px;top:185.78px;font-size:9.5px;line-height:9.5px;color:#1e1e1e;font-weight:normal;transform:scaleX(0.890);">65000</div>
<div class="t" style="left:13.19px;top:162.60px;font-size:9.5px;line-height:9.5px;color:#1e1e1e;font-weight:normal;transform:scaleX(0.890);">70000</div>
<div class="t" style="left:61.16px;top:499.20px;font-size:9.5px;line-height:9.5px;color:#1e1e1e;font-weight:normal;transform:scaleX(0.875);">Janeiro</div>
<div class="t" style="left:114.82px;top:499.20px;font-size:9.5px;line-height:9.5px;color:#1e1e1e;font-weight:normal;transform:scaleX(0.875);">Fevereiro</div>
<div class="t" style="left:178.41px;top:499.20px;font-size:9.5px;line-height:9.5px;color:#1e1e1e;font-weight:normal;transform:scaleX(0.875);">Março</div>
<div class="t" style="left:239.23px;top:499.20px;font-size:9.5px;line-height:9.5px;color:#1e1e1e;font-weight:normal;transform:scaleX(0.875);">Abril</div>
<div class="t" style="left:296.12px;top:499.20px;font-size:9.5px;line-height:9.5px;color:#1e1e1e;font-weight:normal;transform:scaleX(0.875);">Maio</div>
<div class="t" style="left:351.38px;top:499.20px;font-size:9.5px;line-height:9.5px;color:#1e1e1e;font-weight:normal;transform:scaleX(0.875);">Junho</div>
<div class="t" style="left:410.36px;top:499.20px;font-size:9.5px;line-height:9.5px;color:#1e1e1e;font-weight:normal;transform:scaleX(0.875);">Julho</div>
<div class="t" style="left:464.94px;top:499.20px;font-size:9.5px;line-height:9.5px;color:#1e1e1e;font-weight:normal;transform:scaleX(0.875);">Agosto</div>
<div class="t" style="left:517.44px;top:499.20px;font-size:9.5px;line-height:9.5px;color:#1e1e1e;font-weight:normal;transform:scaleX(0.875);">Setembro</div>
<div class="t" style="left:578.02px;top:499.20px;font-size:9.5px;line-height:9.5px;color:#1e1e1e;font-weight:normal;transform:scaleX(0.875);">Outubro</div>
<div class="t" style="left:631.45px;top:499.20px;font-size:9.5px;line-height:9.5px;color:#1e1e1e;font-weight:normal;transform:scaleX(0.875);">Novembro</div>
<div class="t" style="left:689.04px;top:499.20px;font-size:9.5px;line-height:9.5px;color:#1e1e1e;font-weight:normal;transform:scaleX(0.875);">Dezembro</div>
<div class="t" style="left:764.70px;top:152.70px;font-size:9.5px;line-height:9.5px;color:#1e1e1e;font-weight:normal;transform:scaleX(0.885);">2011</div>
<div class="t" style="left:22.60px;top:8.16px;font-size:9.3px;line-height:9.3px;color:#1a1a1a;font-weight:normal;transform:scaleX(1.004);">Relatórios Gráfico</div>
<div class="t" style="left:240.50px;top:30.20px;font-size:9.5px;line-height:9.5px;color:#1d2fc4;font-weight:bold;transform:scaleX(0.937);background:#e2eefd;padding:0 1px;margin-left:-1px;-webkit-text-stroke:0.3px currentColor">Dados Pesquisa</div>
<div class="t" style="left:239.50px;top:48.40px;font-size:9.5px;line-height:9.5px;color:#2a2a2a;font-weight:normal;transform:scaleX(0.907);">Relatório</div>
<div class="t" style="left:280.70px;top:48.40px;font-size:9.5px;line-height:9.5px;color:#111;font-weight:normal;transform:scaleX(0.826);">FATURAMENTO</div>
<div class="t" style="left:434.50px;top:48.40px;font-size:9.5px;line-height:9.5px;color:#2a2a2a;font-weight:normal;transform:scaleX(0.863);">Período</div>
<div class="t" style="left:470.40px;top:48.40px;font-size:9.5px;line-height:9.5px;color:#111;font-weight:normal;transform:scaleX(0.850);">ANO</div>
<div class="t" style="left:566.50px;top:48.40px;font-size:9.5px;line-height:9.5px;color:#2a2a2a;font-weight:normal;transform:scaleX(0.870);">Ano</div>
<div class="t" style="left:588.30px;top:48.40px;font-size:9.5px;line-height:9.5px;color:#111;font-weight:normal;transform:scaleX(0.913);">2011</div>
<div class="t" style="left:690.30px;top:48.40px;font-size:9.5px;line-height:9.5px;color:#a3b3c8;font-weight:normal;transform:scaleX(0.841);">Mês</div>
<div class="t" style="left:242.30px;top:76.40px;font-size:9.5px;line-height:9.5px;color:#1d2fc4;font-weight:bold;transform:scaleX(0.940);background:#e2eefd;padding:0 1px;margin-left:-1px;-webkit-text-stroke:0.3px currentColor">Tipos de Gráficos</div>
<div class="t" style="left:434.10px;top:76.40px;font-size:9.5px;line-height:9.5px;color:#1d2fc4;font-weight:bold;transform:scaleX(0.973);background:#e2eefd;padding:0 1px;margin-left:-1px;-webkit-text-stroke:0.3px currentColor">Pesquisa Comparativa</div>
<div class="t" style="left:256.00px;top:93.80px;font-size:9.5px;line-height:9.5px;color:#222;font-weight:normal;transform:scaleX(0.904);">Barra</div>
<div class="t" style="left:311.90px;top:93.80px;font-size:9.5px;line-height:9.5px;color:#222;font-weight:normal;transform:scaleX(0.873);">Linha</div>
<div class="t" style="left:367.20px;top:93.80px;font-size:9.5px;line-height:9.5px;color:#222;font-weight:normal;transform:scaleX(0.865);">Pizza</div>
<div class="t" style="left:452.50px;top:93.80px;font-size:9.5px;line-height:9.5px;color:#222;font-weight:normal;transform:scaleX(0.875);">1 Ano</div>
<div class="t" style="left:498.80px;top:93.80px;font-size:9.5px;line-height:9.5px;color:#222;font-weight:normal;transform:scaleX(0.875);">2 Anos</div>
<div class="t" style="left:545.40px;top:93.80px;font-size:9.5px;line-height:9.5px;color:#222;font-weight:normal;transform:scaleX(0.875);">3 Anos</div>
<div class="t" style="left:591.70px;top:93.80px;font-size:9.5px;line-height:9.5px;color:#222;font-weight:normal;transform:scaleX(0.875);">4 Anos</div>
<div class="t" style="left:637.90px;top:93.80px;font-size:9.5px;line-height:9.5px;color:#222;font-weight:normal;transform:scaleX(0.875);">5 Anos</div>
<div class="t" style="left:727.90px;top:94.80px;font-size:9.5px;line-height:9.5px;color:#3d5a98;font-weight:normal;transform:scaleX(0.886);">Gerar Gráfico</div>
<div class="t" style="left:8.40px;top:127.00px;font-size:9.5px;line-height:9.5px;color:#eef3fa;font-weight:normal;transform:scaleX(0.891);">Gráfico de Barra</div>
<div class="t" style="left:11.50px;top:525.20px;font-size:10px;line-height:10px;color:#3f5e9e;font-weight:normal;transform:scaleX(0.926);">Plano de Fundo</div>
<div class="t" style="left:105.50px;top:524.80px;font-size:9.5px;line-height:9.5px;color:#111;font-weight:normal;transform:scaleX(0.910);">White</div>
<div class="t" style="left:169.20px;top:525.20px;font-size:10px;line-height:10px;color:#3f5e9e;font-weight:normal;transform:scaleX(0.932);">Cor do Painel</div>
<div class="t" style="left:253.50px;top:524.80px;font-size:9.5px;line-height:9.5px;color:#111;font-weight:normal;transform:scaleX(0.967);">Antique...</div>
<div class="t" style="left:323.00px;top:525.20px;font-size:10px;line-height:10px;color:#3f5e9e;font-weight:normal;transform:scaleX(0.885);">Palete</div>
<div class="t" style="left:353.50px;top:524.80px;font-size:9.5px;line-height:9.5px;color:#111;font-weight:normal;transform:scaleX(0.870);">Padrao</div>
<div class="t" style="left:691.90px;top:525.40px;font-size:10px;line-height:10px;color:#3f5e9e;font-weight:normal;transform:scaleX(0.920);"><u>V</u>isualizar</div>
<div class="t" style="left:764.90px;top:525.40px;font-size:10px;line-height:10px;color:#3f5e9e;font-weight:normal;transform:scaleX(0.900);"><u>F</u>echar</div>
</body></html>
